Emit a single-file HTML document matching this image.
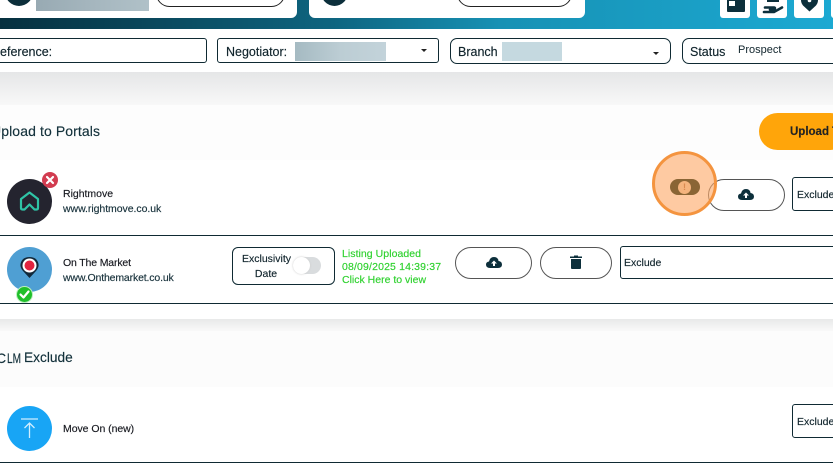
<!DOCTYPE html>
<html><head><meta charset="utf-8"><style>
html,body{margin:0;padding:0}
body{width:833px;height:466px;overflow:hidden;position:relative;background:#fff;font-family:"Liberation Sans","DejaVu Sans",sans-serif;color:#10242c}
.a{position:absolute}
.t{position:absolute;white-space:nowrap;-webkit-text-stroke:.15px currentColor}
.box{position:absolute;border:1px solid #0f2a33;box-sizing:border-box;background:#fff}
.pill{position:absolute;border:1px solid #555;box-sizing:border-box;border-radius:20px;background:#fff}
.blur{position:absolute}
.line{position:absolute;left:0;width:833px;height:1px;background:#0f2a33}
.tile{position:absolute;top:0;width:30px;height:18px;background:#fff;border-radius:0 0 3px 3px}
</style></head><body>
<div class="a" style="left:0;top:0;width:833px;height:29px;background:linear-gradient(90deg,#06303f 0%,#0e6580 40%,#1791b4 60%,#1ca9d2 100%)"></div>
<div class="a" style="left:0;top:0;width:297px;height:18px;background:#fff;border-radius:0 0 6px 0"></div>
<div class="a" style="left:309px;top:0;width:276px;height:18px;background:#fff;border-radius:0 0 6px 6px"></div>
<div class="a" style="left:5px;top:-22px;width:28px;height:28px;border-radius:50%;background:#0c2f3b"></div>
<div class="a" style="left:321px;top:-22px;width:27px;height:28px;border-radius:50%;background:#0c2f3b"></div>
<div class="blur" style="left:36px;top:0;width:113px;height:11px;background:linear-gradient(90deg,#98aab3,#a5b6be 50%,#b0c1c8)"></div>
<div class="pill" style="left:156px;top:-20px;width:129px;height:27px;border-color:#222"></div>
<div class="pill" style="left:457px;top:-20px;width:115px;height:27px;border-color:#222"></div>
<div class="tile" style="left:720px"></div><div class="tile" style="left:757px"></div><div class="tile" style="left:794px"></div><div class="tile" style="left:831px"></div>
<svg class="a" style="left:720px;top:0" width="110" height="18" viewBox="0 0 110 18">
<path fill="#0c2f3b" d="M7 0H25V11Q25 12 24 12H8Q7 12 7 11Z"/><rect x="9" y="1" width="6" height="5" fill="#fff"/>
<rect x="47" y="0" width="12" height="2" fill="#0c2f3b"/>
<path fill="none" stroke="#0c2f3b" stroke-width="2.600" stroke-linecap="round" d="M45 7.500H54Q56 8 54 9.500H50M44 12H54L62 7.500"/>
<path fill="#0c2f3b" d="M81 0H98Q98 3 96 5.500L89.500 11.500L83 5.500Q81 3 81 0Z"/><circle cx="89.500" cy="0.500" r="1.800" fill="#fff"/>
</svg>

<div class="box" style="left:-20px;top:38px;width:227px;height:25px;border-radius:3px"></div>
<div class="t" style="left:-9px;top:45px;font-size:12.500px">Reference:</div>
<div class="box" style="left:217px;top:38px;width:222px;height:25px;border-radius:3px"></div>
<div class="t" style="left:226px;top:45px;font-size:12.500px">Negotiator:</div>
<div class="blur" style="left:295px;top:42px;width:91px;height:19px;background:linear-gradient(90deg,#a5bac2,#bccdd4 50%,#c3d3da)"></div>
<div class="a" style="left:421px;top:49px;border:3px solid transparent;border-top:3px solid #222;border-bottom:0"></div>
<div class="box" style="left:450px;top:38px;width:221px;height:26px;border-radius:7px"></div>
<div class="t" style="left:458px;top:45px;font-size:12.500px">Branch</div>
<div class="blur" style="left:502px;top:42px;width:60px;height:19px;background:#c5d9e0"></div>
<div class="a" style="left:653px;top:52px;border:3px solid transparent;border-top:3px solid #222;border-bottom:0"></div>
<div class="box" style="left:682px;top:38px;width:170px;height:26px;border-radius:7px"></div>
<div class="t" style="left:690px;top:45px;font-size:12.500px">Status</div>
<div class="t" style="left:738px;top:44px;font-size:11px;-webkit-text-stroke:0">Prospect</div>

<div class="a" style="left:0;top:72px;width:833px;height:33px;background:linear-gradient(#e5e6e7,#f8f8f8)"></div>
<div class="a" style="left:0;top:105px;width:833px;height:55px;background:#fdfdfd"></div>
<div class="t" style="left:-9px;top:123px;font-size:14px;letter-spacing:.1px;color:#12303a">Upload to Portals</div>
<div class="a" style="left:759px;top:113px;width:90px;height:37px;border-radius:19px;background:#ffa50a"></div>
<div class="t" style="left:790px;top:126px;font-size:11.500px;font-weight:bold;color:#222">Upload T</div>

<div class="a" style="left:7px;top:179px;width:45px;height:45px;border-radius:50%;background:#24242f"></div>
<svg class="a" style="left:19px;top:190px" width="21" height="22" viewBox="0 0 21 22"><path fill="none" stroke="#2fc4a6" stroke-width="2.200" stroke-linejoin="round" d="M2 9L10.500 2.500L19 9V18Q19 19.500 17.500 19.500H15.500L10.500 14.500L5.500 19.500H3.500Q2 19.500 2 18Z"/></svg>
<div class="a" style="left:42px;top:172px;width:16px;height:16px;border-radius:50%;background:#d23c50"></div>
<svg class="a" style="left:42px;top:172px" width="16" height="16"><path stroke="#fff" stroke-width="2.200" stroke-linecap="round" d="M5 5L11 11M11 5L5 11"/></svg>
<div class="t" style="left:63px;top:188px;font-size:10.500px;letter-spacing:-.02px;color:#16181f">Rightmove</div>
<div class="t" style="left:63px;top:203px;font-size:10.500px;letter-spacing:-.05px;color:#16303a">www.rightmove.co.uk</div>

<div class="pill" style="left:708px;top:179px;width:77px;height:32px"></div>
<svg class="a" style="left:738px;top:187px" width="16" height="15" viewBox="0 0 16 15"><path fill="#0c2f3b" d="M4 13Q0 13 0 9.500Q0 7 3 6.500Q4 2 8 2Q12 2 12.500 6Q16 6.500 16 9.500Q16 13 12 13Z"/><path fill="#fff" d="M8 5.500L11 8.500H9V11H7V8.500H5Z"/></svg>
<div class="box" style="left:792px;top:177px;width:60px;height:34px;border-radius:3px"></div>
<div class="t" style="left:797px;top:189px;font-size:10.500px">Exclude</div>

<div class="line" style="top:235px"></div>
<div class="a" style="left:7px;top:247px;width:45px;height:45px;border-radius:50%;background:#4f9fd3"></div>
<svg class="a" style="left:19px;top:256px" width="21" height="26" viewBox="0 0 21 26"><path fill="#12293a" d="M10.500 22L4 15Q1 11.500 1.500 8Q3 1 10.500 1Q18 1 19.500 8Q20 11.500 17 15Z"/><circle cx="10.500" cy="9.500" r="7" fill="#fff"/><circle cx="10.500" cy="9.500" r="5" fill="#e2233f"/></svg>
<div class="a" style="left:16px;top:286px;width:15px;height:15px;border-radius:50%;background:#1fbf2a;border:1px solid #bdeec0"></div>
<svg class="a" style="left:16px;top:286px" width="17" height="17"><path fill="none" stroke="#fff" stroke-width="2.200" stroke-linecap="round" stroke-linejoin="round" d="M4.500 8.500L7.500 11.500L12.500 5.500"/></svg>
<div class="t" style="left:63px;top:257px;font-size:10.500px;letter-spacing:-.15px;color:#16181f">On The Market</div>
<div class="t" style="left:63px;top:272px;font-size:10.500px;letter-spacing:-.15px;color:#16303a">www.Onthemarket.co.uk</div>

<div class="box" style="left:232px;top:247px;width:103px;height:38px;border-radius:6px"></div>
<div class="t" style="left:242px;top:253px;font-size:10.500px;width:48px;text-align:center">Exclusivity</div>
<div class="t" style="left:242px;top:268px;font-size:10.500px;width:48px;text-align:center">Date</div>
<div class="a" style="left:293px;top:257px;width:28px;height:17px;border-radius:9px;background:#d9dcde"></div>
<div class="a" style="left:293px;top:257px;width:17px;height:17px;border-radius:50%;background:#fff;box-shadow:0 0 2px #ccc"></div>

<div class="t" style="left:342px;top:248px;font-size:10.500px;letter-spacing:.05px;color:#2ed12e">Listing Uploaded</div>
<div class="t" style="left:342px;top:261px;font-size:10.500px;letter-spacing:.15px;color:#2ed12e">08/09/2025 14:39:37</div>
<div class="t" style="left:342px;top:274px;font-size:10.500px;color:#2ed12e">Click Here to view</div>

<div class="pill" style="left:455px;top:247px;width:77px;height:32px"></div>
<svg class="a" style="left:486px;top:255px" width="16" height="15" viewBox="0 0 16 15"><path fill="#0c2f3b" d="M4 13Q0 13 0 9.500Q0 7 3 6.500Q4 2 8 2Q12 2 12.500 6Q16 6.500 16 9.500Q16 13 12 13Z"/><path fill="#fff" d="M8 5.500L11 8.500H9V11H7V8.500H5Z"/></svg>
<div class="pill" style="left:540px;top:247px;width:72px;height:32px"></div>
<svg class="a" style="left:570px;top:255px" width="12" height="14" viewBox="0 0 12 14"><path fill="#0c2f3b" d="M0 1.500H4V0.500H8V1.500H12V3H0ZM1 4H11V13Q11 14 10 14H2Q1 14 1 13Z"/></svg>
<div class="box" style="left:620px;top:246px;width:240px;height:33px;border-radius:3px"></div>
<div class="t" style="left:624px;top:257px;font-size:10.500px">Exclude</div>
<div class="line" style="top:303px"></div>

<div class="a" style="left:0;top:319px;width:833px;height:12px;background:linear-gradient(#e8e9e9,#f9f9f9)"></div>
<div class="a" style="left:0;top:331px;width:833px;height:56px;background:#fcfcfc"></div>
<div class="t" style="left:-4px;top:350px;font-size:14px;color:#12303a">C</div>
<div class="t" style="left:7px;top:350px;font-size:14px;transform:scaleX(.72);transform-origin:0 0;color:#12303a">LM</div>
<div class="t" style="left:24px;top:350px;font-size:13.700px;color:#12303a">Exclude</div>

<div class="a" style="left:7px;top:406px;width:45px;height:45px;border-radius:50%;background:#18a5f5"></div>
<svg class="a" style="left:19px;top:418px" width="21" height="22" viewBox="0 0 21 22"><path fill="none" stroke="#cfeeff" stroke-width="1.300" d="M2 1H19M10.500 20V5M5.500 10L10.500 5L15.500 10"/></svg>
<div class="t" style="left:63px;top:423px;font-size:10.500px;letter-spacing:-.05px;color:#16181f">Move On (new)</div>
<div class="box" style="left:792px;top:404px;width:60px;height:34px;border-radius:3px"></div>
<div class="t" style="left:797px;top:416px;font-size:10.500px">Exclude</div>
<div class="line" style="top:462px"></div>

<div class="a" style="left:652px;top:151px;width:65px;height:65px;box-sizing:border-box;border-radius:50%;background:rgba(253,170,105,.62);border:3px solid #f4943f"></div>
<div class="a" style="left:670px;top:179px;width:30px;height:16px;border-radius:8px;background:#8a6535"></div>
<div class="a" style="left:678px;top:180.500px;width:13px;height:13px;border-radius:50%;background:#f5b47e"></div>
<div class="t" style="left:683px;top:182px;font-size:9px;color:#d98a50;font-weight:bold;-webkit-text-stroke:0">!</div>
</body></html>
